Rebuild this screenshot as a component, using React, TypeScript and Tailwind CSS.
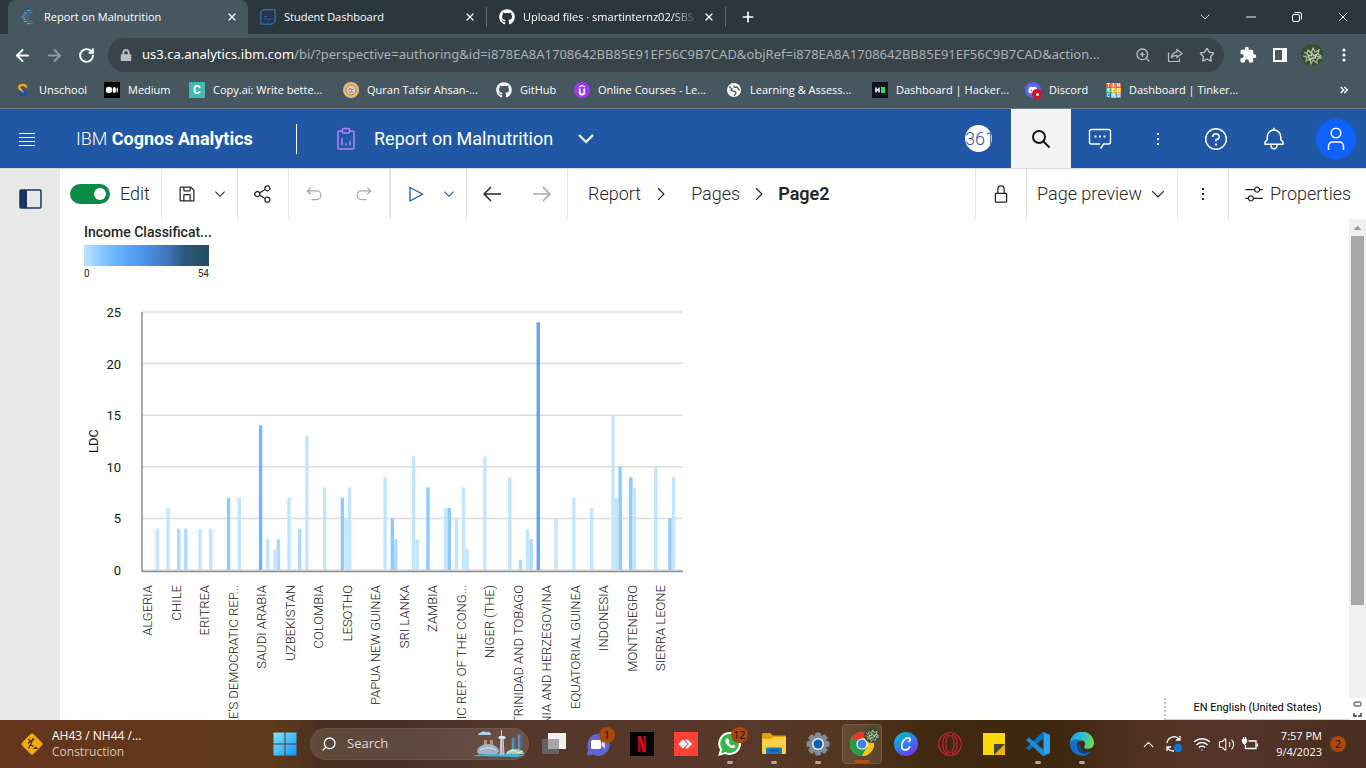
import type { ReactNode } from "react";
import {
  ArrowLeft, ArrowRight, ChevronDown, ChevronUp, Minus, Plus, RotateCw, Search, Star, Volume2, Wifi, X, ZoomIn,
} from "lucide-react";
import { FaDiscord, FaGithub, FaLock } from "react-icons/fa";
import { MdExtension } from "react-icons/md";

const UI = "font-['Open_Sans','Noto_Sans',sans-serif]";
const PLEX = "font-['Roboto','Noto_Sans',sans-serif]";

/* ---------- Carbon style icons ---------- */
function Carbon({ d, className = "size-5" }: { d: string; className?: string }) {
  return (
    <svg viewBox="0 0 32 32" className={className} fill="currentColor" aria-hidden="true">
      <path d={d} />
    </svg>
  );
}

const SAVE = "M27.71,9.29l-5-5A1,1,0,0,0,22,4H6A2,2,0,0,0,4,6V26a2,2,0,0,0,2,2H26a2,2,0,0,0,2-2V10A1,1,0,0,0,27.71,9.29ZM12,6h8v4H12Zm8,20H12V18h8Zm2,0V18a2,2,0,0,0-2-2H12a2,2,0,0,0-2,2v8H6V6h4v4a2,2,0,0,0,2,2h8a2,2,0,0,0,2-2V6.41l4,4V26Z";
const UNDO = "M20,10H7.8149l3.5874-3.5859L10,5,4,11,10,17l1.4023-1.4146L7.8179,12H20a6,6,0,0,1,0,12H12v2h8a8,8,0,0,0,0-16Z";
const REDO = "M12,10H24.1851L20.5977,6.4141,22,5,28,11,22,17l-1.4023-1.4146L24.1821,12H12a6,6,0,0,0,0,12h8v2H12a8,8,0,0,1,0-16Z";
const DOWN = "M16 22L6 12 7.4 10.6 16 19.2 24.6 10.6 26 12z";
const RIGHT = "M22 16L12 26 10.6 24.6 19.2 16 10.6 7.4 12 6z";
const BACK = "M14 26L15.41 24.59 7.83 17 28 17 28 15 7.83 15 15.41 7.41 14 6 4 16 14 26z";
const FORWARD = "M18 6L16.57 7.393 24.15 15 4 15 4 17 24.15 17 16.57 24.573 18 26 28 16 18 6z";
const LOCK = "M24,14H22V8A6,6,0,0,0,10,8v6H8a2,2,0,0,0-2,2V28a2,2,0,0,0,2,2H24a2,2,0,0,0,2-2V16A2,2,0,0,0,24,14ZM12,8a4,4,0,0,1,8,0v6H12ZM24,28H8V16H24Z";
const ADJUST = "M30 8h-4.1c-.5-2.3-2.5-4-4.9-4s-4.4 1.7-4.9 4H2v2h14.1c.5 2.3 2.5 4 4.9 4s4.4-1.7 4.9-4H30V8zm-9 4c-1.7 0-3-1.3-3-3s1.3-3 3-3 3 1.3 3 3-1.3 3-3 3zM2 24h4.1c.5 2.3 2.5 4 4.9 4s4.4-1.7 4.9-4H30v-2H15.9c-.5-2.3-2.5-4-4.9-4s-4.4 1.7-4.9 4H2v2zm9-4c1.7 0 3 1.3 3 3s-1.3 3-3 3-3-1.3-3-3 1.3-3 3-3z";
const SHARE = "M23,20a5,5,0,0,0-3.89,1.89L11.8,17.32a4.46,4.46,0,0,0,0-2.64l7.31-4.57A5,5,0,1,0,18,7a4.79,4.79,0,0,0,.2,1.32l-7.31,4.57a5,5,0,1,0,0,6.22l7.31,4.57A4.79,4.79,0,0,0,18,25a5,5,0,1,0,5-5ZM23,4a3,3,0,1,1-3,3A3,3,0,0,1,23,4ZM7,19a3,3,0,1,1,3-3A3,3,0,0,1,7,19Zm16,9a3,3,0,1,1,3-3A3,3,0,0,1,23,28Z";
const BELL = "M28.7071,19.293,26,16.5859V13a10.0136,10.0136,0,0,0-9-9.9492V1H15V3.0508A10.0136,10.0136,0,0,0,6,13v3.5859L3.2929,19.293A1,1,0,0,0,3,20v3a1,1,0,0,0,1,1h7v.7768a5.152,5.152,0,0,0,4.5,5.1987A5.0057,5.0057,0,0,0,21,25V24h7a1,1,0,0,0,1-1V20A1,1,0,0,0,28.7071,19.293ZM19,25a3,3,0,0,1-6,0V24h6Zm8-3H5V20.4141L7.707,17.707A1,1,0,0,0,8,17V13a8,8,0,0,1,16,0v4a1,1,0,0,0,.293.707L27,20.4141Z";

function Kebab({ className = "size-5" }: { className?: string }) {
  return (
    <svg viewBox="0 0 20 20" className={className} fill="currentColor" aria-hidden="true">
      <rect x="9" y="4" width="2" height="2" />
      <rect x="9" y="9" width="2" height="2" />
      <rect x="9" y="14" width="2" height="2" />
    </svg>
  );
}

function Foliage({ className }: { className: string }) {
  return (
    <svg viewBox="0 0 22 22" className={className} aria-hidden="true">
      <circle cx="11" cy="11" r="11" fill="#3a4b2e" />
      <g fill="none" stroke="#b3bea2" strokeWidth="1.3">
        <path d="M3 8l3 2 1-4 3 3 2-5 2 4 4-2-1 4 3 2-4 1" />
        <path d="M2 12l4 1-1 4 4-2 1 5 2-4 4 3 0-4 4-1-4-2" stroke="#a3b08c" />
        <path d="M7 11l3 1 1-3 2 3 3-2-2 4-3 0-2 2z" stroke="#cdd3be" />
      </g>
    </svg>
  );
}

/* ---------- Browser chrome ---------- */
function CognosMark() {
  return (
    <svg viewBox="0 0 16 16" className="size-4" fill="none" strokeWidth="1.2" aria-hidden="true">
      <path d="M7 1.5h3M4 3.8h3M3 6h3M1.5 8.2h3M3 10.4h3M4 12.5h3M7 14.7h3" stroke="#3fb0c8" />
      <path d="M10 1.5h3M8 3.8h4M7 6h2M5.500 8.2h3M7 10.4h2M8 12.5h4M10 14.7h3" stroke="#3e78b8" />
    </svg>
  );
}

function StudentMark() {
  return (
    <svg viewBox="0 0 16 16" className="size-4" fill="none" aria-hidden="true">
      <path d="M3 .7h12v12L12 15.300H.8V3z" fill="#26344f" stroke="#2f9098" />
      <path d="M1 3v12h11" stroke="#2b52a0" />
      <path d="M4 11l2-2 2 2 3-1M4 7.500h3" stroke="#3a5b8e" />
    </svg>
  );
}

function Tab({ icon, label, wide, active, fade }: { icon: ReactNode; label: string; wide?: boolean; active?: boolean; fade?: boolean }) {
  return (
    <div className={`flex h-[34px] items-center pl-3 pr-2 ${wide ? "w-60" : "w-[238px]"} ${active ? "rounded-t-lg bg-[#46575f]" : ""}`}>
      {icon}
      <a
        href="#tab"
        className={`ml-2 min-w-0 flex-1 overflow-hidden whitespace-nowrap text-[11px] text-white ${fade ? "[mask-image:linear-gradient(90deg,#000_85%,transparent)]" : ""}`}
      >
        {label}
      </a>
      <button aria-label={`Close ${label}`} className="ml-1 flex size-4 items-center justify-center text-white">
        <X className="size-3" strokeWidth={2.5} />
      </button>
    </div>
  );
}

function TabStrip() {
  return (
    <div className="flex h-[34px] items-center bg-[#2c373d] pl-2 text-white">
      <Tab wide active icon={<CognosMark />} label="Report on Malnutrition" />
      <Tab icon={<StudentMark />} label="Student Dashboard" />
      <span className="h-5 w-px bg-[#5d6a71]" />
      <Tab fade icon={<FaGithub className="size-4 shrink-0" />} label="Upload files · smartinternz02/SBS" />
      <span className="h-5 w-px bg-[#5d6a71]" />
      <button aria-label="New tab" className="ml-3 flex size-5 items-center justify-center"><Plus className="size-4" strokeWidth={2.5} /></button>
      <div className="ml-auto flex h-7 items-center">
        <button aria-label="Search tabs" className="flex w-[46px] justify-center"><ChevronDown className="size-4" strokeWidth={1.2} /></button>
        <button aria-label="Minimize" className="flex w-[46px] justify-center"><Minus className="size-4" strokeWidth={1.4} /></button>
        <button aria-label="Restore" className="flex w-[46px] justify-center">
          <svg viewBox="0 0 12 12" className="size-3" fill="none" stroke="currentColor" aria-hidden="true">
            <rect x="1.500" y="3.500" width="7" height="7" rx="1.500" />
            <path d="M3.500 1.500H9a1.500 1.500 0 0 1 1.500 1.500v5.500" />
          </svg>
        </button>
        <button aria-label="Close window" className="flex w-[46px] justify-center"><X className="size-4" strokeWidth={1.4} /></button>
      </div>
    </div>
  );
}

function AddressBar() {
  return (
    <div className="flex h-[42px] items-center bg-[#46575f] pl-3 text-white">
      <button aria-label="Back" className="flex w-5 justify-center"><ArrowLeft className="size-[19px]" strokeWidth={2.4} /></button>
      <button aria-label="Forward" className="ml-3 flex w-5 justify-center text-[#8f9a9f]"><ArrowRight className="size-[19px]" strokeWidth={2.4} /></button>
      <button aria-label="Reload" className="ml-3 flex w-5 justify-center"><RotateCw className="size-[17px]" strokeWidth={2.8} /></button>
      <div className="ml-3 flex h-[34px] min-w-0 flex-1 items-center rounded-full bg-[#39444a] pl-3 pr-px text-[#b9c0c4]">
        <FaLock className="size-3 shrink-0" />
        <a href="#address" className="ml-[10px] min-w-0 flex-1 overflow-hidden whitespace-nowrap font-['Noto_Sans',sans-serif] text-[13px] text-[#a9b1b5]">
          <span className="text-white">us3.ca.analytics.ibm.com</span>
          /bi/?perspective=authoring&amp;id=i878EA8A1708642BB85E91EF56C9B7CAD&amp;objRef=i878EA8A1708642BB85E91EF56C9B7CAD&amp;action...
        </a>
        <button aria-label="Zoom" className="flex w-8 shrink-0 justify-center"><ZoomIn className="size-4" /></button>
        <button aria-label="Share page" className="flex w-8 shrink-0 justify-center">
          <svg viewBox="0 0 16 16" className="size-4" fill="none" stroke="currentColor" strokeWidth="1.2" aria-hidden="true">
            <path d="M1.500 5.500v9h11v-3" />
            <path d="M10 2.500l5 4-5 4V8.300c-2.500 0-4.400.6-5.800 2.700.4-3.200 2.400-5.700 5.800-6.200z" />
          </svg>
        </button>
        <button aria-label="Bookmark" className="flex w-8 shrink-0 justify-center"><Star className="size-4" /></button>
      </div>
      <button aria-label="Extensions" className="ml-2 flex w-8 justify-center"><MdExtension className="size-[18px]" /></button>
      <button aria-label="Side panel" className="flex w-8 justify-center">
        <svg viewBox="0 0 14 14" className="size-[14px]" fill="none" aria-hidden="true">
          <rect x="1" y="1" width="12" height="12" stroke="white" strokeWidth="2" />
          <rect x="9" y="1" width="4" height="12" fill="white" />
        </svg>
      </button>
      <button aria-label="Profile" className="flex w-8 justify-center"><Foliage className="size-[22px]" /></button>
      <button aria-label="Browser menu" className="mr-[6px] flex w-8 justify-center">
        <svg viewBox="0 0 4 16" className="h-4 w-1" fill="white" aria-hidden="true">
          <circle cx="2" cy="3" r="1.600" /><circle cx="2" cy="8" r="1.600" /><circle cx="2" cy="13" r="1.600" />
        </svg>
      </button>
    </div>
  );
}

function TinkercadMark() {
  const cells = [
    ["T", "#f0503c"], ["I", "#f47c30"], ["N", "#f0503c"],
    ["K", "#2eb36b"], ["E", "#f4b324"], ["R", "#f4b324"],
    ["C", "#1f6fc0"], ["A", "#79c4ea"], ["D", "#55a5de"],
  ];
  return (
    <svg viewBox="0 0 15 15" className="size-[15px]" aria-hidden="true">
      {cells.map(([c, f], i) => (
        <g key={c}>
          <rect x={(i % 3) * 5} y={Math.floor(i / 3) * 5} width="5" height="5" fill={f} />
          <text x={(i % 3) * 5 + 2.5} y={Math.floor(i / 3) * 5 + 4.2} fontSize="5" fontWeight="700" textAnchor="middle" fill="white" fontFamily="Roboto">{c}</text>
        </g>
      ))}
    </svg>
  );
}

const bookmarks: { label: string; width: string; icon: ReactNode }[] = [
  {
    label: "Unschool", width: "w-[89px]",
    icon: (
      <svg viewBox="0 0 16 16" className="size-4" fill="none" strokeWidth="2.400" aria-hidden="true">
        <path d="M11.500 5.500C11 2 4 2 4.200 5.500c.2 2.500 3.300 2.500 5.300 4" stroke="#f5a623" />
        <path d="M7.500 7.500c2 .8 4 1.700 3.500 4C10.500 14 5 14 3.500 11" stroke="#1f4f9c" />
      </svg>
    ),
  },
  {
    label: "Medium", width: "w-[85px]",
    icon: (
      <svg viewBox="0 0 16 16" className="size-4" aria-hidden="true">
        <rect width="16" height="16" fill="#000" />
        <g fill="#fff"><circle cx="5" cy="8" r="3.200" /><ellipse cx="10.300" cy="8" rx="1.600" ry="3" /><ellipse cx="13.200" cy="8" rx=".7" ry="2.700" /></g>
      </svg>
    ),
  },
  {
    label: "Copy.ai: Write bette...", width: "w-[154px]",
    icon: <span className="flex size-4 items-center justify-center bg-[#42b8b0] font-['Roboto',sans-serif] text-xs font-bold leading-4">C</span>,
  },
  {
    label: "Quran Tafsir Ahsan-...", width: "w-[153px]",
    icon: (
      <svg viewBox="0 0 16 16" className="size-4" aria-hidden="true">
        <circle cx="8" cy="8" r="8" fill="#e8b878" /><circle cx="8" cy="8" r="5" fill="#d6d3c2" stroke="#b8783c" />
        <path d="M5.500 8.500l2-2.500 1 2.500 2-2M6 10h4" stroke="#9a6a3a" fill="none" strokeWidth=".9" />
      </svg>
    ),
  },
  { label: "GitHub", width: "w-[78px]", icon: <FaGithub className="size-4" /> },
  {
    label: "Online Courses - Le...", width: "w-[152px]",
    icon: (
      <svg viewBox="0 0 16 16" className="size-4" fill="none" stroke="#fff" strokeWidth="1.800" aria-hidden="true">
        <circle cx="8" cy="8" r="8" fill="#a435f0" stroke="none" />
        <path d="M5.700 6.500v4a2.300 2 0 0 0 4.600 0v-4" />
        <path d="M5.200 4.900L8 3.400l2.800 1.500" strokeWidth="1.300" />
      </svg>
    ),
  },
  {
    label: "Learning & Assess...", width: "w-[146px]",
    icon: (
      <svg viewBox="0 0 16 16" className="size-4" aria-hidden="true">
        <circle cx="8" cy="8" r="7" fill="#fff" />
        <path d="M3 4.500l3 2.500-1.500 1.500M8.500 3.500c-1.500 2 .5 2 2.500 1.500l2.500 3.500M5 8.500c2 .5 5 .5 5 2.500l-2 3" stroke="#46575f" strokeWidth="1.300" fill="none" />
      </svg>
    ),
  },
  {
    label: "Dashboard | Hacker...", width: "w-[153px]",
    icon: (
      <svg viewBox="0 0 16 16" className="size-4" aria-hidden="true">
        <rect width="16" height="16" fill="#0e141e" />
        <path d="M4 5.500v5M7 5.500v5M4 8h3" stroke="#fff" strokeWidth="1.500" />
        <rect x="9" y="5" width="4" height="6" fill="#1ee06a" />
      </svg>
    ),
  },
  {
    label: "Discord", width: "w-[81px]",
    icon: (
      <span className="relative flex size-4 items-center justify-center rounded-full bg-[#5865f2]">
        <FaDiscord className="size-[10px]" />
        <span className="absolute -bottom-px -right-px flex size-[10px] items-center justify-center rounded-full bg-[#d8121c]">
          <span className="size-[3px] rounded-full bg-white" />
        </span>
      </span>
    ),
  },
  { label: "Dashboard | Tinker...", width: "w-[140px]", icon: <TinkercadMark /> },
];

function Bookmarks() {
  return (
    <nav aria-label="Bookmarks" className="flex h-8 items-center overflow-hidden bg-[#46575f] pb-1 pl-[15px] text-[11px] text-white">
      {bookmarks.map((b) => (
        <a key={b.label} href="#bookmark" className={`flex shrink-0 items-center gap-2 whitespace-nowrap ${b.width}`}>
          <span className="shrink-0">{b.icon}</span>
          {b.label}
        </a>
      ))}
      <button aria-label="More bookmarks" className="ml-auto mr-[18px]">
        <svg viewBox="0 0 8 8" className="size-2" fill="none" stroke="white" strokeWidth="1.400" aria-hidden="true"><path d="M.7 1l3 3-3 3M4.300 1l3 3-3 3" /></svg>
      </button>
    </nav>
  );
}

/* ---------- Cognos header ---------- */
function HeaderButton({ label, children }: { label: string; children: ReactNode }) {
  return <button aria-label={label} className="flex h-full w-[58px] items-center justify-center">{children}</button>;
}

function CognosHeader() {
  return (
    <header className={`flex h-[60px] shrink-0 items-center border-t border-[#6c7c86] bg-[#2058a6] text-white ${PLEX}`}>
      <button aria-label="Open menu" className="flex w-[54px] justify-center">
        <svg viewBox="0 0 16 14" className="h-[14px] w-4" stroke="white" aria-hidden="true">
          <path d="M0 1.500h16M0 5.500h16M0 9.500h16M0 13.500h16" />
        </svg>
      </button>
      <h1 className="ml-[22px] w-[220px] whitespace-nowrap text-lg font-light">IBM <b className="font-bold">Cognos Analytics</b></h1>
      <span className="h-[30px] w-px bg-white" />
      <svg viewBox="0 0 20 24" className="ml-[39px] h-6 w-5" fill="none" stroke="#b583f5" strokeWidth="1.500" aria-hidden="true">
        <rect x="2" y="4" width="16" height="18" rx="1.500" />
        <rect x="6.500" y="1.500" width="7" height="4.500" rx="1" fill="#2058a6" />
        <path d="M6 18.500V11M10 18.500v-2.300M14 18.500V14" />
      </svg>
      <button className="ml-[18px] flex items-center gap-6 whitespace-nowrap text-lg">
        Report on Malnutrition
        <svg viewBox="0 0 18 12" className="h-3 w-[18px]" fill="none" stroke="white" strokeWidth="2.200" aria-hidden="true"><path d="M2 2l7 7 7-7" /></svg>
      </button>
      <div className="ml-auto flex h-full items-center">
        <span className="mr-[19px] flex size-[27px] items-center overflow-hidden rounded-full bg-white text-lg font-light text-[#2058a6]">361</span>
        <button aria-label="Search" className="flex h-full w-[60px] items-center justify-center bg-[#f4f4f4] text-[#161616]">
          <svg viewBox="0 0 20 20" className="size-5" fill="none" stroke="currentColor" strokeWidth="2" aria-hidden="true"><circle cx="8" cy="8" r="6" /><path d="M12.500 12.500l6 6" /></svg>
        </button>
        <HeaderButton label="Assistant">
          <svg viewBox="0 0 24 24" className="size-6" fill="none" stroke="white" strokeWidth="1.400" aria-hidden="true">
            <path d="M12.500 21.500l3-4.500H20.500a2 2 0 0 0 2-2V4.500a2 2 0 0 0-2-2h-17a2 2 0 0 0-2 2V15a2 2 0 0 0 2 2H12" />
            <path d="M6.500 9.500h2M11 9.500h2M15.500 9.500h2" strokeWidth="2" />
          </svg>
        </HeaderButton>
        <HeaderButton label="More actions"><Kebab /></HeaderButton>
        <HeaderButton label="Help">
          <svg viewBox="0 0 24 24" className="size-6" fill="none" stroke="white" strokeWidth="1.400" aria-hidden="true">
            <circle cx="12" cy="12" r="10.300" />
            <path d="M8.800 10V9.500A2.500 2.500 0 0 1 11.300 7h1.200a2.700 2.700 0 0 1 0 5.400H12v2.100" />
            <path d="M12 16.500v2" strokeWidth="1.800" />
          </svg>
        </HeaderButton>
        <HeaderButton label="Notifications"><Carbon d={BELL} className="size-6" /></HeaderButton>
        <button aria-label="Account" className="ml-[13px] mr-[10px] flex size-10 items-center justify-center rounded-full bg-[#0f62fe]">
          <svg viewBox="0 0 24 24" className="size-6" fill="none" stroke="white" strokeWidth="1.500" aria-hidden="true">
            <circle cx="12" cy="6" r="4.800" />
            <path d="M4.500 23v-4a4 4 0 0 1 4-4h7a4 4 0 0 1 4 4v4" />
          </svg>
        </button>
      </div>
    </header>
  );
}

/* ---------- Report toolbar ---------- */
function Tool({ label, children, muted }: { label: string; children: ReactNode; muted?: boolean }) {
  return (
    <button aria-label={label} className={`flex h-full w-[50px] items-center justify-center ${muted ? "text-[#a8a8a8]" : ""}`}>{children}</button>
  );
}

function Group({ children, className = "" }: { children: ReactNode; className?: string }) {
  return <div className={`flex h-full items-center border-[#e4e4e4] ${className}`}>{children}</div>;
}

function ReportToolbar() {
  return (
    <div className="flex h-[51px] shrink-0 items-center border-t border-[#dcdcdc] text-lg font-light text-[#262626]">
      <Group className="w-[102px] border-r pl-[10px]">
        <label className="flex items-center gap-[10px]">
          <input type="checkbox" role="switch" defaultChecked className="peer sr-only" />
          <span className="flex h-5 w-10 items-center justify-end rounded-full bg-[#0a8a45] px-1"><span className="size-3 rounded-full bg-white" /></span>
          Edit
        </label>
      </Group>
      <Group className="w-[76px] border-r">
        <Tool label="Save"><Carbon d={SAVE} /></Tool>
        <button aria-label="Save options"><Carbon d={DOWN} className="size-4" /></button>
      </Group>
      <Group className="border-r"><Tool label="Share"><Carbon d={SHARE} /></Tool></Group>
      <Group className="border-r-2">
        <Tool label="Undo" muted><Carbon d={UNDO} /></Tool>
        <Tool label="Redo" muted><Carbon d={REDO} /></Tool>
      </Group>
      <Group className="w-[76px] border-r text-[#2058a6]">
        <Tool label="Run">
          <svg viewBox="0 0 20 20" className="size-5" fill="none" stroke="currentColor" strokeWidth="1.300" aria-hidden="true"><path d="M4 3.500v13.500l12.500-6.750z" /></svg>
        </Tool>
        <button aria-label="Run options"><Carbon d={DOWN} className="size-4" /></button>
      </Group>
      <Group className="border-r">
        <Tool label="Previous"><Carbon d={BACK} className="size-6" /></Tool>
        <Tool label="Next" muted><Carbon d={FORWARD} className="size-6" /></Tool>
      </Group>
      <nav aria-label="Breadcrumb" className="ml-5 flex items-center whitespace-nowrap">
        <a href="#report">Report</a>
        <Carbon d={RIGHT} className="ml-[10px] mr-5 size-5" />
        <a href="#pages">Pages</a>
        <Carbon d={RIGHT} className="mx-[9px] size-5" />
        <a href="#page2" className="font-semibold">Page2</a>
      </nav>
      <div className="ml-auto flex h-full items-center whitespace-nowrap">
        <Group className="border-x"><Tool label="Lock"><Carbon d={LOCK} /></Tool></Group>
        <Group className="w-[151px] border-r pl-[10px]">
          <button className="flex items-center gap-[6px]">Page preview<Carbon d={DOWN} /></button>
        </Group>
        <Group className="border-r"><Tool label="More"><Kebab /></Tool></Group>
        <button className="flex w-[137px] items-center gap-[6px] pl-[15px]"><Carbon d={ADJUST} />Properties</button>
      </div>
    </div>
  );
}

/* ---------- Chart ---------- */
type Shade = "a" | "b" | "c" | "d" | "e";
const shades: Record<Shade, string> = { a: "#c3e6ff", b: "#acdaff", c: "#8dcbff", d: "#70b6ff", e: "#65a4f2" };

// [category slot, value, shade]
const bars: [number, number, Shade][] = [
  [4, 4, "a"], [7, 6, "a"], [10, 4, "b"], [12, 4, "b"], [16, 4, "a"], [19, 4, "a"], [24, 7, "c"], [27, 7, "a"],
  [33, 14, "d"], [35, 3, "a"], [37, 2, "a"], [38, 3, "b"], [41, 7, "a"], [44, 4, "b"], [46, 13, "a"], [51, 8, "a"],
  [56, 7, "c"], [57, 5, "a"], [58, 8, "a"], [68, 9, "a"], [70, 5, "c"], [71, 3, "b"], [76, 11, "a"], [77, 3, "a"],
  [80, 8, "c"], [85, 6, "a"], [86, 6, "c"], [88, 5, "a"], [90, 8, "a"], [91, 2, "a"], [96, 11, "a"], [103, 9, "a"],
  [106, 1, "b"], [108, 4, "a"], [109, 3, "b"], [111, 24, "e"], [116, 5, "a"], [121, 7, "a"], [126, 6, "a"],
  [132, 15, "a"], [133, 7, "a"], [134, 10, "c"], [137, 9, "c"], [138, 8, "a"], [144, 10, "a"], [148, 5, "c"], [149, 9, "a"],
];

const categories = [
  "ALGERIA", "CHILE", "ERITREA", "LAO PEOPLE'S DEMOCRATIC REP...", "SAUDI ARABIA", "UZBEKISTAN", "COLOMBIA", "LESOTHO",
  "PAPUA NEW GUINEA", "SRI LANKA", "ZAMBIA", "DEMOCRATIC REP. OF THE CONG...", "NIGER (THE)", "TRINIDAD AND TOBAGO",
  "BOSNIA AND HERZEGOVINA", "EQUATORIAL GUINEA", "INDONESIA", "MONTENEGRO", "SIERRA LEONE",
];

const LEFT = 58;
const BASE = 289;
const UNIT = 10.32;
const STEP = 3.56;

function LdcChart() {
  return (
    <svg viewBox="0 0 620 500" width="620" height="500" className="block max-w-none shrink-0" role="img" aria-label="LDC by country" fontFamily="Roboto, 'Noto Sans', sans-serif" fill="#161616">
      {[0, 5, 10, 15, 20, 25].map((v) => (
        <g key={v}>
          <path d={`M${LEFT} ${BASE - v * UNIT}h541`} stroke="#dedede" strokeWidth="1.500" />
          <text x="37" y={BASE - v * UNIT + 5} textAnchor="end" fontSize="13">{v}</text>
        </g>
      ))}
      {bars.map(([slot, value, shade]) => (
        <rect key={slot} x={LEFT - 0.6 + slot * STEP} y={BASE - value * UNIT} width="3.400" height={value * UNIT} fill={shades[shade]} />
      ))}
      <path d={`M${LEFT} ${BASE - 25 * UNIT}V${BASE + 1.5}H599`} fill="none" stroke="#8d8d8d" strokeWidth="1.500" />
      <text transform="translate(14 172) rotate(-90)" fontSize="13">LDC</text>
      {categories.map((name, i) => (
        <text key={name} transform={`translate(${68 + i * 28.5} 304) rotate(-90)`} textAnchor="end" fontSize="13" fontWeight="300">{name}</text>
      ))}
    </svg>
  );
}

function Report() {
  return (
    <div className="relative flex min-h-0 flex-1 overflow-hidden bg-white">
      <main className="min-w-0 flex-1 overflow-hidden pl-6 pt-[5px] text-[#262626]">
        <h2 className="text-sm font-medium leading-[17px]">Income Classificat...</h2>
        <div className="mt-1 h-[21px] w-[125px] bg-[linear-gradient(90deg,#bde3ff_0%,#7cc3ff_17%,#58a4fa_36%,#4d91e0_50%,#3f72b8_68%,#2f597c_80%,#264a60_100%)]" />
        <div className="flex w-[125px] justify-between pt-px text-[10px] leading-[14px]"><span>0</span><span>54</span></div>
        <LdcChart />
      </main>
      <div className="flex w-[17px] shrink-0 flex-col items-center">
        <div className="flex min-h-0 w-full flex-1 flex-col items-center bg-[#f0f0f0]">
          <svg viewBox="0 0 17 17" className="size-[17px] shrink-0" aria-hidden="true"><path d="M4.500 11l4-4.500 4 4.500z" fill="#9b9b9b" /></svg>
          <div className="h-[77%] w-[13px] bg-[#a8a8a8]" />
          <div className="flex-1" />
        </div>
        <svg viewBox="0 0 17 22" className="h-[22px] w-[17px] shrink-0" fill="none" stroke="#777" strokeWidth="1.400" aria-hidden="true">
          <rect x="5" y="4" width="7" height="4" rx="1.500" />
          <path d="M5 15v3h3M9 18h3v-3" stroke="#333" />
        </svg>
      </div>
      <button className="absolute bottom-0 right-[17px] flex h-[22px] w-[185px] items-center justify-center border-b border-l-2 border-b-[#d5d5d5] border-l-[#c4c4c4] bg-white font-['Roboto',sans-serif] text-[11px] text-black [border-left-style:dotted]">
        EN English (United States)
      </button>
    </div>
  );
}

/* ---------- Taskbar ---------- */
function TaskButton({ label, children, running, active }: { label: string; children: ReactNode; running?: boolean; active?: boolean }) {
  return (
    <button aria-label={label} className={`relative mx-[2px] flex h-10 w-10 shrink-0 items-center justify-center rounded ${active ? "border border-white/10 bg-white/10" : ""}`}>
      {children}
      {running && <span className="absolute bottom-0 h-[3px] w-[6px] rounded-full bg-[#b3a59c]" />}
      {active && <span className="absolute bottom-0 h-[3px] w-4 rounded-full bg-[#b54f12]" />}
    </button>
  );
}

function Badge({ children }: { children: ReactNode }) {
  return <span className="absolute top-[3px] left-[21px] flex h-4 min-w-4 items-center justify-center rounded-full bg-[#a8480c] px-[2px] text-[11px] leading-4 text-[#1c0d04]">{children}</span>;
}

function Skyline() {
  return (
    <svg viewBox="0 0 54 28" className="h-7 w-[54px]" aria-hidden="true">
      <path d="M5 5h13a3 3 0 0 0-5-2.500A4 4 0 0 0 7 3a2 2 0 0 0-2 2z" fill="#a9d3ea" />
      <path d="M0 26c8-3 46-3 52-1l-8 2z" fill="#45b3d4" />
      <path d="M11 10h3v9h-3zM17 10h3v9h-3z" fill="#b98f6a" />
      <path d="M4 22a11 8 0 0 1 22 0l-3 2H6z" fill="#9fb2c6" />
      <path d="M7 20c4-3 12-3 16 0" stroke="#dce6ee" fill="none" />
      <path d="M28.500 0v24M28 8l-1 16h4l-1-16z" stroke="#c5d3de" fill="#b4909a" />
      <rect x="25.500" y="6" width="7" height="3" rx="1.500" fill="#d9e3ea" />
      <path d="M38 8l5-1v17h-5zM44 4l5-1v21h-5z" fill="#426f8f" />
      <path d="M40 8v15M46 5v18" stroke="#7ab0c8" />
      <path d="M33 24a9 5 0 0 1 18 0z" fill="#a9c9a9" />
      <path d="M34 23l6-3 5 3 5-2" stroke="#eaf3e4" fill="none" />
    </svg>
  );
}

function Taskbar() {
  return (
    <footer className="relative flex h-12 shrink-0 items-center bg-[linear-gradient(90deg,#65351c_0%,#61381c_10%,#5f3a1c_20%,#47301f_24%,#48302a_30%,#55372b_38%,#57382a_55%,#54361f_62%,#40290f_68%,#40270f_78%,#513223_84%,#55352a_90%,#492d20_100%)] text-white">
      <a href="#traffic" className="flex w-[263px] items-center gap-2 pl-5 text-xs">
        <svg viewBox="0 0 24 24" className="size-6" aria-hidden="true">
          <rect x="4" y="4" width="16" height="16" rx="2" transform="rotate(45 12 12)" fill="#f9a80c" />
          <path d="M8 7.500l4 1.500-1.500 3.500 3 2M10.500 9l-2.500 2.500M10.500 12.500l-2 4" stroke="#34383a" strokeWidth="1.300" fill="none" />
          <circle cx="13" cy="7.500" r="1.200" fill="#34383a" /><path d="M13 17h5l-2-2.500-1.500 1z" fill="#34383a" />
        </svg>
        <span className="leading-4">AH43 / NH44 /...<br /><span className="text-[#d5c8be]">Construction</span></span>
      </a>
      <TaskButton label="Start">
        <svg viewBox="0 0 24 24" className="size-6" aria-hidden="true">
          <defs><linearGradient id="win" x1="0" y1="0" x2="1" y2="1"><stop stopColor="#7ce6fd" /><stop offset="1" stopColor="#1494f8" /></linearGradient></defs>
          <path d="M.5.500h11v11H.5zM12.500.500h11v11h-11zM.5 12.500h11v11H.5zM12.500 12.500h11v11h-11z" fill="url(#win)" />
        </svg>
      </TaskButton>
      <label className="mx-[3px] flex h-8 w-[219px] shrink-0 items-center rounded-full border border-white/5 bg-white/12 pl-[10px]">
        <Search className="size-4 -scale-x-100" />
        <input type="text" aria-label="Search" placeholder="Search" className="ml-[10px] w-[110px] bg-transparent text-[13px] text-white placeholder:text-[#e2d9d5] placeholder:opacity-100" />
        <span className="ml-auto pr-px"><Skyline /></span>
      </label>
      <TaskButton label="Task view">
        <svg viewBox="0 0 24 24" className="size-6" aria-hidden="true"><rect y="7" width="17" height="15" fill="#636363" /><rect x="6" y="1" width="18" height="16" fill="#f0f0f0" /><rect x="6" y="7" width="11" height="10" fill="#a5a5a5" /></svg>
      </TaskButton>
      <TaskButton label="Chat">
        <svg viewBox="0 0 24 24" className="size-6" aria-hidden="true"><path d="M12 2a11 11 0 1 1-5 20.500L1 23.500 2 17A11 11 0 0 1 12 2z" fill="#6364d0" /><rect x="5" y="8" width="10" height="9" rx="1.500" fill="#fff" /><path d="M15.500 11l3.500-2.500v8L15.500 14z" fill="#d6d8ff" /></svg>
        <Badge>1</Badge>
      </TaskButton>
      <TaskButton label="Netflix">
        <svg viewBox="0 0 24 24" className="size-6" aria-hidden="true"><rect width="24" height="24" fill="#000" /><path d="M8 4h2.700v16L8 20.300zM13.300 4H16v16.300l-2.700-.3z" fill="#b00710" /><path d="M8 4h2.700L16 20.300l-2.800-.3z" fill="#e50914" /></svg>
      </TaskButton>
      <TaskButton label="AnyDesk">
        <svg viewBox="0 0 24 24" className="size-6" aria-hidden="true"><rect width="24" height="24" fill="#fc4137" /><path d="M9 7.500l4.500 4.500L9 16.500 4.500 12z" fill="#fff" /><path d="M12 7.500h1.700L18.200 12l-4.500 4.500H12l-.8-.8L14.900 12l-3.700-3.700z" fill="#fff" /></svg>
      </TaskButton>
      <TaskButton label="WhatsApp" running>
        <svg viewBox="0 0 24 24" className="size-6" aria-hidden="true"><path d="M12.500 0A11.500 11.500 0 1 1 7 22L.2 24 2 17.500A11.500 11.500 0 0 1 12.500 0z" fill="#fff" /><path d="M12.500 2A9.500 9.500 0 1 1 7.300 20L3 21.200l1.200-4A9.500 9.500 0 0 1 12.500 2z" fill="#35b84c" /><path d="M8.500 6.500c-2 1-1.500 3.500.5 6s5 4.500 7 3.500 1.500-2.500 0-3-1.500 1-2.500.5-3-2.500-2.700-3.300.9-1 .3-2.200S9.300 6 8.500 6.500z" fill="#fff" /></svg>
        <Badge>12</Badge>
      </TaskButton>
      <TaskButton label="File Explorer" running>
        <svg viewBox="0 0 24 24" className="size-6" aria-hidden="true"><path d="M0 2.500A1.500 1.500 0 0 1 1.500 1h7l2 2.500H23a1 1 0 0 1 1 1V10H0z" fill="#e3a00b" /><path d="M0 7h9l2.500-2H24v15.500a1.500 1.500 0 0 1-1.500 1.500h-21A1.500 1.500 0 0 1 0 20.500z" fill="#fcd04a" /><path d="M4 22v-5a1.500 1.500 0 0 1 1.500-1.500h13A1.500 1.500 0 0 1 20 17v5z" fill="#1677c8" /><path d="M7.500 18.500h9" stroke="#0d5799" strokeWidth="1.500" /></svg>
      </TaskButton>
      <TaskButton label="Settings" running>
        <svg viewBox="0 0 24 24" className="size-6" aria-hidden="true">
          <g fill="#828c96"><circle cx="12" cy="12" r="9" />{[0, 45, 90, 135].map((a) => <rect key={a} x="9" y=".5" width="6" height="23" rx="1.500" transform={`rotate(${a} 12 12)`} />)}</g>
          <circle cx="12" cy="12" r="6" fill="#e8ecef" /><circle cx="12" cy="12" r="4.500" fill="#0d5fb0" />
        </svg>
      </TaskButton>
      <TaskButton label="Chrome" active>
        <svg viewBox="0 0 24 24" className="size-6" aria-hidden="true"><circle cx="12" cy="12" r="12" fill="#fbc116" /><path d="M12 12L1.600 6A12 12 0 0 1 22.400 6z" fill="#e33b2e" /><path d="M1.600 6A12 12 0 0 0 12 24l5-9-5-3z" fill="#259b4b" /><path d="M12 6h10.400A12 12 0 0 1 12 24l5.200-9z" fill="#fbc116" /><circle cx="12" cy="12" r="5.600" fill="#fff" /><circle cx="12" cy="12" r="4.500" fill="#3f7ee8" /></svg>
        <Foliage className="absolute left-[21px] top-[2px] size-4" />
      </TaskButton>
      <TaskButton label="Canva">
        <svg viewBox="0 0 24 24" className="size-6" aria-hidden="true"><defs><linearGradient id="cv" x1=".1" y1="0" x2=".8" y2="1"><stop stopColor="#00c4cc" /><stop offset=".5" stopColor="#2b80ea" /><stop offset="1" stopColor="#7d2ae8" /></linearGradient></defs><circle cx="12" cy="12" r="12" fill="url(#cv)" /><path d="M15 9.500c1.300-.5 2-3.500-.8-3.500C10 6 7.500 11 7.700 14.500c.2 4.500 5.500 4.500 8 .5" fill="none" stroke="#fff" strokeWidth="1.700" strokeLinecap="round" /></svg>
      </TaskButton>
      <TaskButton label="Opera GX">
        <svg viewBox="0 0 24 24" className="size-6" fill="none" stroke="#d81e45" strokeWidth="1.100" aria-hidden="true"><circle cx="12" cy="12" r="11.300" /><ellipse cx="12" cy="12" rx="4.200" ry="8.500" /><path d="M10 2.500C3 5 3 19 10 21.500M14 2.500c7 2.500 7 16.500 0 19" /></svg>
      </TaskButton>
      <TaskButton label="Sticky Notes">
        <svg viewBox="0 0 22 22" className="size-[22px]" aria-hidden="true"><rect width="22" height="22" fill="#fdd807" /><path d="M11 22L22 11v11z" fill="#f3ae00" /><path d="M11 11h11L11 22z" fill="#454545" /></svg>
      </TaskButton>
      <TaskButton label="Visual Studio Code" running>
        <svg viewBox="0 0 24 24" className="size-6" aria-hidden="true"><path d="M17.500 0v6.500L3 18.500l-3-2.500L16 .5z" fill="#0a72b8" /><path d="M17.500 24v-6.500L3 5.500 0 8l16 15.500z" fill="#1a8ad4" /><path d="M17.500 0L24 3v18l-6.500 3z" fill="#2aa4f2" /></svg>
      </TaskButton>
      <TaskButton label="Edge" running>
        <svg viewBox="0 0 24 24" className="size-6" aria-hidden="true"><defs><linearGradient id="ed" x1="0" y1=".2" x2="1" y2=".4"><stop stopColor="#1da0e0" /><stop offset=".6" stopColor="#35c1c9" /><stop offset="1" stopColor="#6bdc4c" /></linearGradient></defs><path d="M0 12A12 12 0 0 1 24 11c0 4-3 5.800-6.500 5.800-3 0-4-1.300-3-2.500C16 12 15 8.500 11 8.500 6 8.500 0 12 0 15z" fill="url(#ed)" /><path d="M0 12c1-4.500 6-5.500 9.500-4C6.500 11 6 15 8.500 18.500c3 4 8.500 3.500 13 .5A12 12 0 0 1 0 12z" fill="#1271c8" /><path d="M9.500 10C6.500 12 6.500 16 8.500 18.500c3 4 8.500 3.500 13 .5-4.500 1.500-13 1-12-9z" fill="#0b4a94" /></svg>
      </TaskButton>
      <div className="ml-auto flex h-full items-center">
        <button aria-label="Show hidden icons" className="flex w-6 justify-center"><ChevronUp className="size-[17px]" strokeWidth={1.5} /></button>
        <button aria-label="Updates" className="flex w-7 justify-center">
          <svg viewBox="0 0 18 18" className="size-[18px]" fill="none" stroke="white" strokeWidth="1.300" aria-hidden="true"><path d="M2 8a7 7 0 0 1 12.500-3.500M15 1v4h-4M2 16v-4h4M2.500 12.500A7 7 0 0 0 9 16" /><circle cx="13" cy="13" r="4.200" fill="#0b78d8" stroke="none" /></svg>
        </button>
        <button aria-label="Network" className="flex w-7 justify-center"><Wifi className="size-[18px]" strokeWidth={1.8} /></button>
        <button aria-label="Volume" className="flex w-5 justify-center"><Volume2 className="size-[17px]" strokeWidth={1.5} /></button>
        <button aria-label="Battery" className="flex w-7 justify-center">
          <svg viewBox="0 0 18 14" className="h-[14px] w-[18px]" fill="none" stroke="white" strokeWidth="1.300" aria-hidden="true"><path d="M7.500 4H15v7.500H4.500V8M16.500 6.500v3" /><path d="M2.500 0v3M4.500 0v3" /><path d="M1.500 3h4v2l-2 2-2-2z" fill="white" /></svg>
        </button>
        <time className="w-[58px] text-right text-[11px] leading-4">7:57 PM<br />9/4/2023</time>
        <span className="ml-2 mr-5 flex size-4 items-center justify-center rounded-full bg-[#a8480c] text-[10px] text-[#1c0d04]">2</span>
      </div>
    </footer>
  );
}

export default function App() {
  return (
    <div className={`flex h-screen flex-col overflow-hidden bg-white ${UI}`}>
      <TabStrip />
      <AddressBar />
      <Bookmarks />
      <CognosHeader />
      <div className={`flex min-h-0 flex-1 ${PLEX}`}>
        <aside className="w-[60px] shrink-0 border-t border-[#d8d8d8] bg-[#e8e8e8] pt-5">
          <button aria-label="Toggle panel" className="mx-auto flex w-6 justify-center">
            <svg viewBox="0 0 23 20" className="h-5 w-[23px]" aria-hidden="true"><rect x="1" y="1" width="21" height="18" rx="1" fill="#e8e8e8" stroke="#1d3461" strokeWidth="1.500" /><rect x="1" y="1" width="7" height="18" fill="#1d3461" /></svg>
          </button>
        </aside>
        <div className="flex min-w-0 flex-1 flex-col">
          <ReportToolbar />
          <Report />
        </div>
      </div>
      <Taskbar />
    </div>
  );
}
